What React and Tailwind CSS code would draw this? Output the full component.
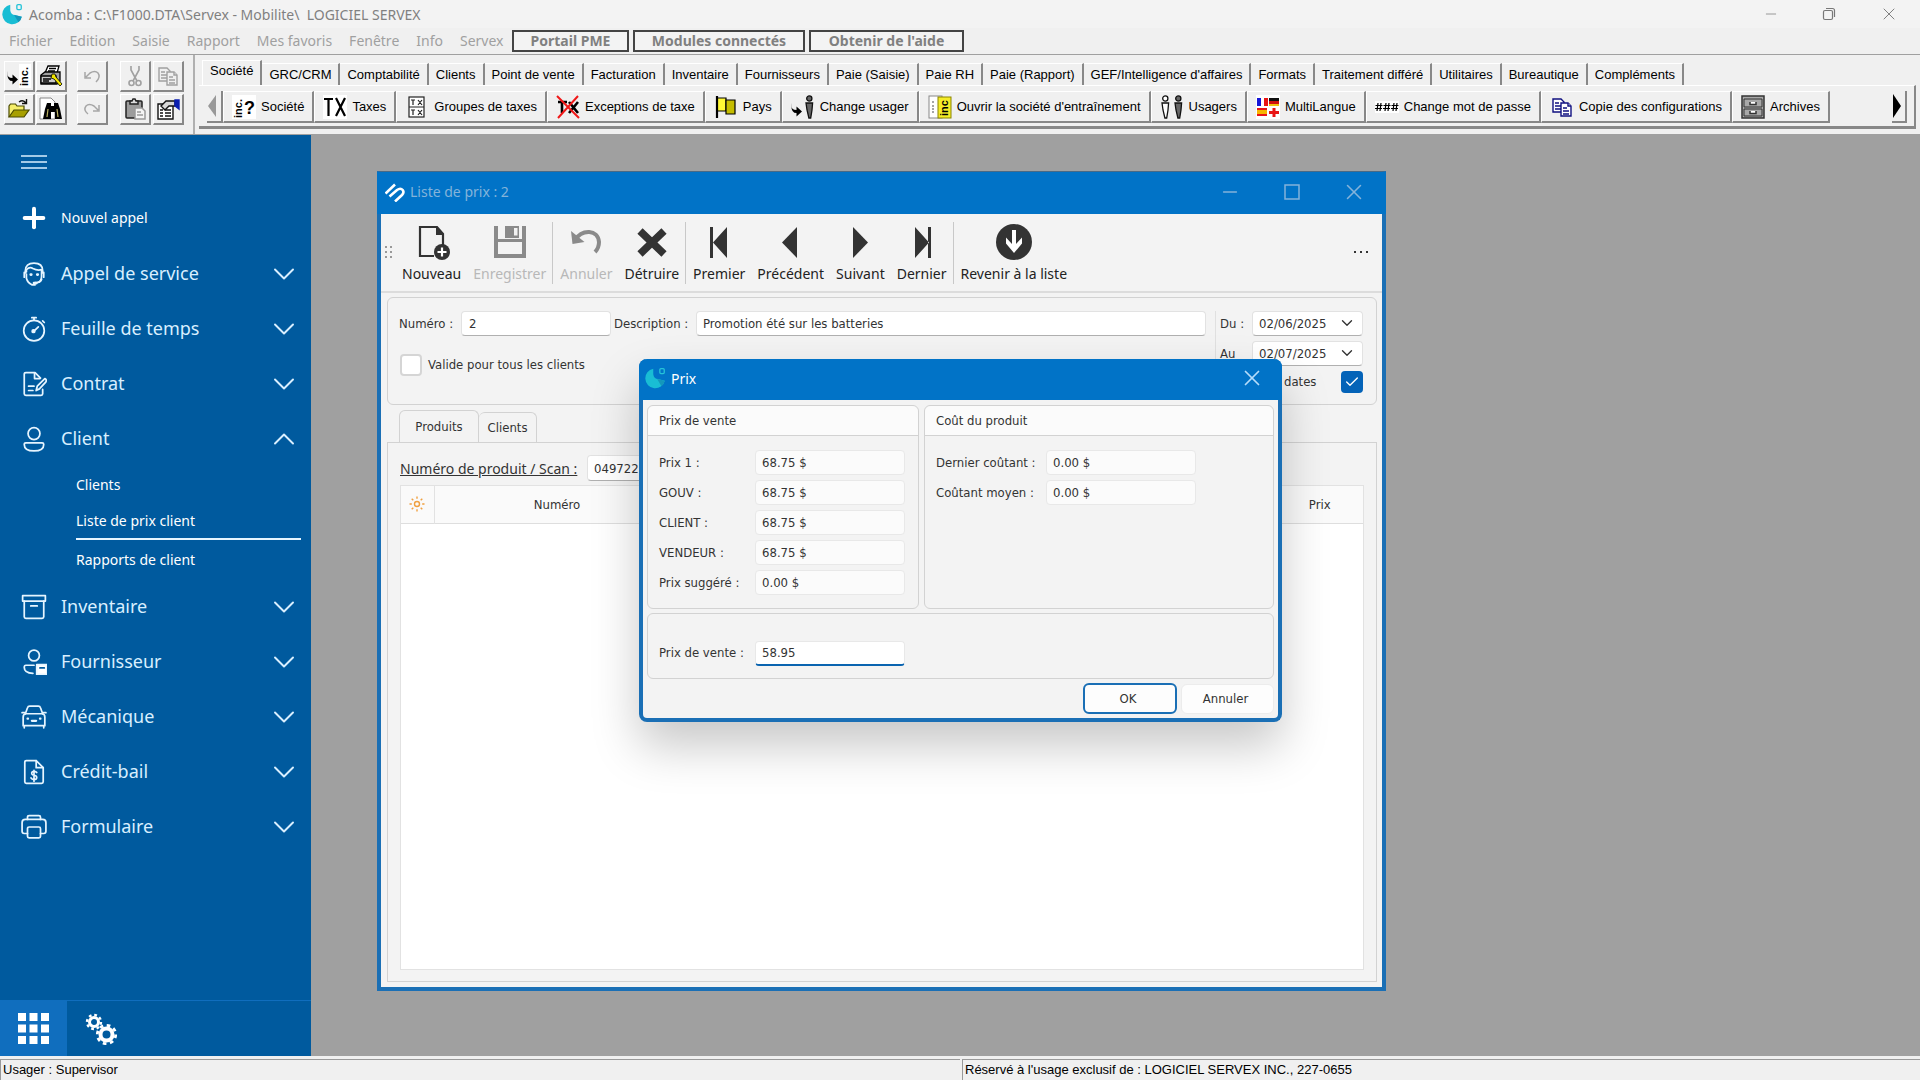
import { useState } from "react";
import { ChevronDown, ChevronUp, Minus, X, Check, Plus } from "lucide-react";

const classicFont = "font-['Liberation_Sans',Arial,sans-serif]";
const modernFont = "font-['Noto_Sans','Open_Sans',sans-serif]";
const formFont = "font-['DejaVu_Sans_Condensed','Noto_Sans',sans-serif]";

const menus = ["Fichier", "Edition", "Saisie", "Rapport", "Mes favoris", "Fenêtre", "Info", "Servex"];

const moduleTabs = [
  "Société", "GRC/CRM", "Comptabilité", "Clients", "Point de vente", "Facturation",
  "Inventaire", "Fournisseurs", "Paie (Saisie)", "Paie RH", "Paie (Rapport)",
  "GEF/Intelligence d'affaires", "Formats", "Traitement différé", "Utilitaires",
  "Bureautique", "Compléments",
];

/* ---------- Icons ---------- */

function AcombaLogo({ className }) {
  return (
    <svg viewBox="0 0 20 20" className={className}>
      <path d="M7.500 1.500A9 9 0 1 0 18 12.500L12 11Q8 10.500 7.500 6.500Z" fill="#19bdd4" />
      <path d="M11 10.800l7 1.700a9 9 0 0 1-3 5z" fill="#1497bb" />
      <rect x="13.500" y="1.500" width="4" height="4.500" rx="1" fill="none" stroke="#25c3d8" strokeWidth="1.200" />
    </svg>
  );
}

function ServexLogo() {
  return (
    <svg viewBox="0 0 20 20" className="size-5" fill="none" stroke="#fff" strokeWidth="2.600">
      <path d="M0.500 11.500L10 2.500" />
      <path d="M4.500 14.500L12 8Q15.500 5.500 17.700 8Q19.500 10.500 17 13L10 19.500" />
    </svg>
  );
}

function IncArrow() {
  return (
    <svg viewBox="0 0 24 24" className="size-6">
      <rect x="12" y="0" width="12" height="24" fill="#fff" />
      <path d="M0.500 7v3q0 4 5 4V10.500l5.500 5-5.500 5V17Q-0.500 17 0.500 7z" fill="#000" />
      <text x="-22" y="21" transform="rotate(-90)" fontSize="11" fontWeight="700" fontFamily="Liberation Sans">inc.</text>
    </svg>
  );
}

function PrintWrench() {
  return (
    <svg viewBox="0 0 24 24" className="size-6" stroke="#000" strokeWidth="1.300">
      <path d="M9 2h11l-2 7H6z" fill="#fff" />
      <path d="M10 4.500h7M9 7h7" />
      <path d="M2 11l4-3h15v9l-3 3H2z" fill="#a0a0a0" />
      <path d="M2 12h15v7H2z" fill="#c8c8c8" />
      <path d="M4 15h8M4 17h6" />
      <path d="M13 10h3l1 3 6 7-2 2-6-7-3-1z" fill="#f2e600" strokeWidth="0.800" />
    </svg>
  );
}

function UndoGray() {
  return (
    <svg viewBox="0 0 24 24" className="size-6" fill="none" stroke="#a6a6a6" strokeWidth="1.500">
      <path d="M5 8v6h6M6 13l4-4q5-3 8 0 3 4-2 9" />
    </svg>
  );
}

function RedoGray() {
  return (
    <svg viewBox="0 0 24 24" className="size-6" fill="none" stroke="#a6a6a6" strokeWidth="1.500">
      <path d="M19 8v6h-6M18 13l-4-4q-5-3-8 0-3 4 2 8" />
    </svg>
  );
}

function CutGray() {
  return (
    <svg viewBox="0 0 24 24" className="size-6" fill="none" stroke="#a0a0a0" strokeWidth="1.600">
      <path d="M8 2v4l6 11M16 2v4l-6 11" />
      <circle cx="8.500" cy="19" r="2.500" />
      <circle cx="15.500" cy="19" r="2.500" />
    </svg>
  );
}

function PageGlyph({ color, fill }) {
  return (
    <svg viewBox="0 0 24 24" className="size-6" stroke={color} strokeWidth="1.400" fill={fill}>
      <path d="M3 4h8l3 3v10H3z" />
      <path d="M5 8h4M5 11h6M5 14h6" />
      <path d="M11 8h7l3 3v10H11z" />
      <path d="M18 8v3h3M13 13h4M13 16h6M13 19h6" />
    </svg>
  );
}

function OpenFolder() {
  return (
    <svg viewBox="0 0 24 24" className="size-6" stroke="#4a4a00" strokeWidth="1.200">
      <path d="M2 20V9l1.500-2h5L10 9h7v4" fill="#f5ee6a" />
      <path d="M2 20l5-7h15l-5 7z" fill="#a8a000" />
      <path d="M12 5q4-3 7 1M19.500 2v4.500H15" fill="none" stroke="#111" strokeWidth="1.400" />
    </svg>
  );
}

function Binoculars() {
  return (
    <svg viewBox="0 0 24 24" className="size-6">
      <path d="M1 1h11l4 4v17H1z" fill="#fff" stroke="#888" strokeWidth="1" />
      <path d="M8 6h4v3h3V6h4l2 6 2 10h-7v-7h-4v7H4l2-10z" fill="#000" />
      <path d="M9 12l-1 8M18 12l1 8" stroke="#b8b060" strokeWidth="1.200" />
    </svg>
  );
}

function Clipboard() {
  return (
    <svg viewBox="0 0 24 24" className="size-6" stroke="#222" strokeWidth="1.500">
      <rect x="3" y="4" width="16" height="17" rx="1" fill="#9c9c9c" />
      <path d="M7 7V4h2l1-2h2l1 2h2v3z" fill="#ddd" />
      <path d="M12 11h7l3 3v8H12z" fill="#f4f4f4" stroke="#999" />
      <path d="M14 15h4M14 18h6" stroke="#999" />
    </svg>
  );
}

function HandForm() {
  return (
    <svg viewBox="0 0 24 24" className="size-6" stroke="#111" strokeWidth="1.400">
      <path d="M2 7h15v15H2z" fill="#fff" />
      <path d="M4 13h3M9 13h6M4 16h3M9 16h6M4 19h3M9 19h6" />
      <path d="M5 9l5-5h9v5h-6l-4 4z" fill="#d8d8d8" />
      <path d="M19 3h4v9l-4-3z" fill="#0b1fb0" stroke="#0b1fb0" />
    </svg>
  );
}

function IncQuestion() {
  return (
    <svg viewBox="0 0 24 24" className="size-6">
      <rect width="24" height="24" fill="#fff" />
      <text x="-23" y="10" transform="rotate(-90)" fontSize="11" fontWeight="700" fontFamily="Liberation Sans">inc.</text>
      <text x="12" y="19" fontSize="18" fontWeight="700" fontFamily="Liberation Sans">?</text>
    </svg>
  );
}

function TaxIcon() {
  return (
    <svg viewBox="0 0 24 24" className="size-6">
      <rect width="24" height="24" fill="#fff" />
      <path d="M1 4h9M5.500 4v17M13 3l9 18M22 3l-9 18" stroke="#000" strokeWidth="2.200" />
    </svg>
  );
}

function TaxGroup() {
  return (
    <svg viewBox="0 0 24 24" className="size-6" fill="none" stroke="#222" strokeWidth="1.200">
      <rect x="4" y="2" width="15" height="20" fill="#fff" />
      <path d="M4 12h15M6 5h4M8 5v5M13 5l4 5M17 5l-4 5M6 15h4M8 15v5M13 15l4 5M17 15l-4 5" />
    </svg>
  );
}

function TaxException() {
  return (
    <svg viewBox="0 0 24 24" className="size-6">
      <path d="M2 7h9M6 7v11M13 7l9 11M22 7l-9 11" stroke="#000" strokeWidth="2.600" />
      <path d="M1 1l22 22M22 1L2 23" stroke="#f01818" strokeWidth="2" />
    </svg>
  );
}

function FlagIcon() {
  return (
    <svg viewBox="0 0 24 24" className="size-6" stroke="#000" strokeWidth="1.200">
      <path d="M3 3h9v13H3z" fill="#fff835" />
      <path d="M12 5h9v14h-9z" fill="#c5bd00" />
      <path d="M3 1v22" strokeWidth="2.200" />
    </svg>
  );
}

function Person({ x, fill }) {
  return (
    <g transform={`translate(${x} 0)`} stroke="#111" strokeWidth="1.300" fill={fill}>
      <circle cx="4.300" cy="3.500" r="2.600" />
      <path d="M1 8h6.600l-.6 7-1.300 8H3.900L2 15z" />
    </g>
  );
}

function ChangeUser() {
  return (
    <svg viewBox="0 0 24 24" className="size-6">
      <path d="M0.500 8v3q0 4 5 4V11.500l5.500 5-5.500 5V18Q-0.500 18 0.500 8z" fill="#000" />
      <Person x="14" fill="#666" />
    </svg>
  );
}

function UsersIcon() {
  return (
    <svg viewBox="0 0 24 24" className="size-6">
      <Person x="1" fill="#fff" />
      <Person x="14" fill="#666" />
    </svg>
  );
}

function TrainingIcon() {
  return (
    <svg viewBox="0 0 24 24" className="size-6">
      <rect x="1" y="1" width="13" height="22" fill="#fff" stroke="#888" />
      <path d="M5 6v2M5 10v8" stroke="#888" strokeWidth="1.500" strokeDasharray="2 1" />
      <rect x="10" y="2" width="13" height="21" fill="#f5ec28" stroke="#8a8400" />
      <text x="-21" y="20" transform="rotate(-90)" fontSize="11" fontWeight="700" fontFamily="Liberation Sans">inc</text>
    </svg>
  );
}

function LanguagesIcon() {
  return (
    <svg viewBox="0 0 24 24" className="size-6">
      <rect width="24" height="24" fill="#fff" />
      <path d="M1 3h4v8H1z" fill="#1616d8" />
      <path d="M8 3h4v8H8z" fill="#e81515" />
      <path d="M13 3h10v3H13z" fill="#111" />
      <path d="M13 6h10v3H13z" fill="#d01010" />
      <path d="M13 9h10v2H13z" fill="#f0c010" />
      <path d="M1 13h10v2H1zM1 19h10v2H1z" fill="#e81515" />
      <path d="M1 15h10v4H1z" fill="#f7b500" />
      <path d="M16.500 13h3v3h3.500v3h-3.500v3h-3v-3H13v-3h3.500z" fill="#e81515" />
    </svg>
  );
}

function HashIcon() {
  return (
    <svg viewBox="0 0 24 24" className="size-6">
      <rect y="6" width="24" height="12" fill="#fff" />
      <path d="M3 8L2 16M6 8L5 16M0.500 10.500h7M0 13.500h7M11 8l-1 8M14 8l-1 8M8.500 10.500h7M8 13.500h7M19 8l-1 8M22 8l-1 8M16.500 10.500h7M16 13.500h7" stroke="#000" strokeWidth="1.200" />
    </svg>
  );
}

function CabinetIcon() {
  return (
    <svg viewBox="0 0 24 24" className="size-6" stroke="#333" strokeWidth="1.500" fill="#a8a8a8">
      <path d="M1 1h22v22H1z" />
      <path d="M3 4h18v8H3zM3 14h18v7H3z" strokeWidth="1" />
      <path d="M9 7v2.500h6V7M9 16v2.500h6V16" fill="#fff" />
    </svg>
  );
}

const moduleActions = [
  { label: "Société", icon: <IncQuestion /> },
  { label: "Taxes", icon: <TaxIcon /> },
  { label: "Groupes de taxes", icon: <TaxGroup /> },
  { label: "Exceptions de taxe", icon: <TaxException /> },
  { label: "Pays", icon: <FlagIcon /> },
  { label: "Change usager", icon: <ChangeUser /> },
  { label: "Ouvrir la société d'entraînement", icon: <TrainingIcon /> },
  { label: "Usagers", icon: <UsersIcon /> },
  { label: "MultiLangue", icon: <LanguagesIcon /> },
  { label: "Change mot de passe", icon: <HashIcon /> },
  { label: "Copie des configurations", icon: <PageGlyph color="#101080" fill="#fff" /> },
  { label: "Archives", icon: <CabinetIcon /> },
];

const navIcons = {
  service: (
    <>
      <path d="M4 11V9q0-7 8-7t8 7v2" />
      <path d="M5 10V8q3-3 6-1 4 2 8 1v6q0 5-4 6" />
      <path d="M5 12v4q1 4 5 6h3M3 10.500v4.500M21 10.500v4.500M19 17q-1 3-6 3" />
      <path d="M9 12.500h.5M15 12.500h.5M12 20.500h2" strokeWidth="2.500" />
    </>
  ),
  time: (
    <>
      <circle cx="12" cy="13.500" r="9.500" />
      <path d="M10 1.500h4M12 2v2M20 4.500l1.500 1.500M12 14l4-4" />
      <circle cx="11.500" cy="14" r="1.200" fill="#fff" />
    </>
  ),
  contract: (
    <>
      <path d="M20 17v4q0 1.500-1.500 1.500h-14Q3 22.500 3 21V3Q3 1.500 4.500 1.500H13l5 5" />
      <path d="M12.500 2v5h5M7 14h5M7 18h4" />
      <path d="M14 18l1-4 7-7q2 1 1 3l-6 6.500z" />
    </>
  ),
  client: (
    <>
      <circle cx="12" cy="7" r="5.500" />
      <path d="M4.500 15.500h15q1.500 0 1.500 1.500 0 6-9 6t-9-6q0-1.500 1.500-1.500z" />
    </>
  ),
  stock: (
    <>
      <rect x="1.500" y="1.500" width="21" height="5" />
      <path d="M3 6.500V21q0 1.500 1.500 1.500h15q1.500 0 1.500-1.500V6.500M9 11h6" />
    </>
  ),
  supplier: (
    <>
      <circle cx="12" cy="6" r="5" />
      <path d="M12 15H4.500Q3 15 3 17q0 5 8 5.500" />
      <path d="M14.500 14.500h9.500v9h-9.500z" fill="#fff" />
      <path d="M17.500 17.500h4" stroke="#005a9e" />
    </>
  ),
  car: (
    <>
      <path d="M4 9l2-5.500Q6.500 2 8 2h8q1.500 0 2 1.500L20 9M1 8h3M20 8h3" />
      <path d="M2 20v-8q0-3 3-3h14q3 0 3 3v8zM3 20v2M21 20v2" />
      <path d="M6 13.500h.5M17.500 13.500h.5M10 15.500h4" strokeWidth="2" />
    </>
  ),
  credit: (
    <>
      <path d="M14 1.500H5Q3.500 1.500 3.500 3v18q0 1.500 1.500 1.500h14q1.500 0 1.500-1.500V8z" />
      <path d="M14 1.500V8h6.500" />
      <path d="M14.500 12.500q-1-1.500-3-1-2 .5-1.500 2.200.4 1 2.200 1.300 2.300.5 2.300 2 0 2-2.500 2-2 0-2.800-1.500M12 10.500v10" />
    </>
  ),
  form: (
    <>
      <path d="M6 5V3q0-1.500 1.500-1.500h9Q18 1.500 18 3v2" />
      <path d="M6 18H3q-2 0-2-2V8q0-3 3-3h16q3 0 3 3v8q0 2-2 2h-3" />
      <rect x="6" y="12" width="12" height="10" rx="1.500" />
    </>
  ),
};

const navItems = [
  { label: "Appel de service", icon: "service" },
  { label: "Feuille de temps", icon: "time" },
  { label: "Contrat", icon: "contract" },
  { label: "Client", icon: "client", children: ["Clients", "Liste de prix client", "Rapports de client"] },
  { label: "Inventaire", icon: "stock" },
  { label: "Fournisseur", icon: "supplier" },
  { label: "Mécanique", icon: "car" },
  { label: "Crédit-bail", icon: "credit" },
  { label: "Formulaire", icon: "form" },
];

/* ---------- Application chrome ---------- */

function ClassicButton({ label, children }) {
  return (
    <button
      aria-label={label}
      className="flex size-[31px] items-center justify-center border-t border-l border-r-2 border-b-2 border-t-white border-l-white border-r-[#888] border-b-[#888] bg-[#f0f0f0]"
    >
      {children}
    </button>
  );
}

function TitleBar() {
  return (
    <header className="flex h-7 items-center bg-[#f3f3f3] pl-0.5 text-[14px] text-[#808080]">
      <AcombaLogo className="size-[22px]" />
      <h1 className="ml-[5px] flex-1 whitespace-pre">{"Acomba : C:\\F1000.DTA\\Servex - Mobilite\\  LOGICIEL SERVEX"}</h1>
      <button aria-label="Réduire" className="flex w-[58px] justify-center"><Minus className="size-4" strokeWidth={1.2} /></button>
      <button aria-label="Restaurer" className="flex w-[58px] justify-center">
        <svg viewBox="0 0 16 16" className="size-4" fill="none" stroke="#777" strokeWidth="1.200">
          <rect x="2.500" y="4.500" width="9" height="9" rx="1.500" />
          <path d="M5 2.500h6.500q2 0 2 2V11" />
        </svg>
      </button>
      <button aria-label="Fermer" className="flex w-[62px] justify-center"><X className="size-5" strokeWidth={1.2} /></button>
    </header>
  );
}

function MenuBar() {
  return (
    <nav className="flex h-[27px] items-center border-b border-[#a0a0a0] bg-[#f0f0f0] pb-px pl-px text-[14px] text-[#a0a0a0]">
      <div className="flex w-[511px] gap-px">
        {menus.map((m) => (
          <button key={m} className="px-2 leading-5">{m}</button>
        ))}
      </div>
      <div className="flex gap-1 text-[#808080]">
        <button className="h-[22px] w-[117px] border-2 border-[#444] bg-[#f3f3f3] leading-4 font-bold">Portail PME</button>
        <button className="h-[22px] w-[172px] border-2 border-[#444] bg-[#f3f3f3] leading-4 font-bold">Modules connectés</button>
        <button className="h-[22px] w-[155px] border-2 border-[#444] bg-[#f3f3f3] leading-4 font-bold">Obtenir de l'aide</button>
      </div>
    </nav>
  );
}

function ToolArea() {
  return (
    <div className={`flex h-20 border-b border-[#a0a0a0] bg-[#f0f0f0] text-[13px] text-black ${classicFont}`}>
      <div className="flex flex-col gap-[2px] pt-[6px] pl-1">
        <div className="flex">
          <ClassicButton label="Changer de société"><IncArrow /></ClassicButton>
          <div className="mr-[10px] ml-px"><ClassicButton label="Configurer l'impression"><PrintWrench /></ClassicButton></div>
          <ClassicButton label="Défaire"><UndoGray /></ClassicButton>
          <div className="mr-[2px] ml-3"><ClassicButton label="Couper"><CutGray /></ClassicButton></div>
          <ClassicButton label="Copier"><PageGlyph color="#a0a0a0" fill="#f0f0f0" /></ClassicButton>
        </div>
        <div className="flex">
          <ClassicButton label="Ouvrir"><OpenFolder /></ClassicButton>
          <div className="mr-[10px] ml-px"><ClassicButton label="Rechercher"><Binoculars /></ClassicButton></div>
          <ClassicButton label="Refaire"><RedoGray /></ClassicButton>
          <div className="mr-[2px] ml-3"><ClassicButton label="Coller"><Clipboard /></ClassicButton></div>
          <ClassicButton label="Propriétés"><HandForm /></ClassicButton>
        </div>
      </div>

      <div className="mr-1 ml-[9px] border-l-2 border-[#b0b0b0]" />

      <div className="mr-1 min-w-0 flex-1">
        <div className="flex h-[30px] items-end pl-[3px]">
          {moduleTabs.map((t, i) => (
            <button
              key={t}
              className={
                i === 0
                  ? "h-[25px] border-t border-r-2 border-l border-t-white border-r-[#888] border-l-white px-[7px] pb-1 whitespace-nowrap"
                  : "h-[22px] border-t border-r-2 border-t-white border-r-[#888] px-[7px] whitespace-nowrap"
              }
            >
              {t}
            </button>
          ))}
        </div>
        <div className="flex h-11 items-start border-t border-r-2 border-b-[3px] border-t-white border-r-[#888] border-b-[#888] pt-[5px] pr-[7px] pl-2">
          <button aria-label="Défiler à gauche" className="flex h-8 w-4 items-center border-r-2 border-b-2 border-[#888]">
            <svg viewBox="0 0 10 24" className="h-6 w-[10px]"><path d="M9 1v22L1 12z" fill="#999" /></svg>
          </button>
          {moduleActions.map((a) => (
            <button
              key={a.label}
              className="flex h-8 items-center gap-[5px] border-t border-r-2 border-b-2 border-l border-t-white border-r-[#888] border-b-[#888] border-l-white px-2 whitespace-nowrap"
            >
              {a.icon}
              {a.label}
            </button>
          ))}
          <button aria-label="Défiler à droite" className="ml-auto flex h-8 w-[15px] items-center border-r-2 border-b-2 border-[#888]">
            <svg viewBox="0 0 10 24" className="h-6 w-[10px]"><path d="M1 0v24l8-12z" fill="#000" /></svg>
          </button>
        </div>
      </div>
    </div>
  );
}

function Sidebar() {
  return (
    <aside className="flex w-[311px] shrink-0 flex-col bg-[#005a9e] text-[18px] text-[#d9efff]">
      <button aria-label="Menu" className="flex h-[54px] items-center pl-[21px]">
        <svg viewBox="0 0 26 16" className="h-4 w-[26px]" stroke="#d9efff" strokeWidth="1.300">
          <path d="M0 2h26M0 8h26M0 14h26" />
        </svg>
      </button>
      <button className="flex h-[57px] items-center pl-[18px] text-[14px] text-white">
        <Plus className="mr-[11px] size-8" strokeWidth={3} />
        Nouvel appel
      </button>
      {navItems.map((item) => (
        <div key={item.label}>
          <button className="flex h-[55px] w-full items-center pr-[9px] pl-[21px]">
            <svg viewBox="0 0 24 24" className="mr-[14px] size-[26px]" fill="none" stroke="#e6f5ff" strokeWidth="1.600" strokeLinecap="round" strokeLinejoin="round">
              {navIcons[item.icon]}
            </svg>
            <span className="flex-1 text-left">{item.label}</span>
            {item.children ? <ChevronUp className="size-9" strokeWidth={1.3} /> : <ChevronDown className="size-9" strokeWidth={1.3} />}
          </button>
          {item.children && (
            <ul className="mr-[10px] ml-[76px] pb-[2px] text-[14px] text-white">
              {item.children.map((c, i) => (
                <li key={c} className={i === 1 ? "mb-px border-b-2 border-[#e6f5ff]" : ""}>
                  <a href="#" className="flex h-9 items-center">{c}</a>
                </li>
              ))}
            </ul>
          )}
        </div>
      ))}
      <div className="mt-auto flex h-14 border-t border-[#106ebe]">
        <button aria-label="Modules" className="flex w-[67px] items-center justify-center bg-[#106ebe]">
          <svg viewBox="0 0 31 31" className="size-[31px]" fill="#fff">
            <path d="M0 0h8v8H0zM11.500 0h8v8h-8zM23 0h8v8h-8zM0 11.500h8v8H0zM11.500 11.500h8v8h-8zM23 11.500h8v8h-8zM0 23h8v8H0zM11.500 23h8v8h-8zM23 23h8v8h-8z" />
          </svg>
        </button>
        <button aria-label="Configuration" className="flex w-[67px] items-center justify-center">
          <svg viewBox="0 0 32 32" className="size-8" fill="none" stroke="#fff">
            <circle cx="9" cy="9" r="4.500" strokeWidth="3" />
            <circle cx="9" cy="9" r="7" strokeWidth="2.400" strokeDasharray="2.750 2.750" />
            <circle cx="21.500" cy="21.500" r="6" strokeWidth="4" />
            <circle cx="21.500" cy="21.500" r="9.200" strokeWidth="2.800" strokeDasharray="3.610 3.610" />
          </svg>
        </button>
      </div>
    </aside>
  );
}

/* ---------- Price list window ---------- */

function ToolButton({ label, disabled, children }) {
  return (
    <button disabled={disabled} className={`flex flex-col items-center gap-1 px-[6px] ${disabled ? "text-[#b8b8b8]" : "text-[#222]"}`}>
      <svg viewBox="0 0 36 38" className="h-[38px] w-9">{children}</svg>
      <span className="leading-5">{label}</span>
    </button>
  );
}

function Separator() {
  return <span className="mr-px h-[62px] border-l border-[#c8c8c8]" />;
}

function WindowToolbar() {
  return (
    <div className="flex h-[79px] items-start border-b-2 border-[#dcdcdc] pt-2 pr-3 pl-1 text-[14px]">
      <svg viewBox="0 0 8 14" className="mt-[23px] mr-[3px] h-[14px] w-2" fill="#999">
        <path d="M0 1h2v2H0zM5 1h2v2H5zM0 6h2v2H0zM5 6h2v2H5zM0 11h2v2H0zM5 11h2v2H5z" />
      </svg>
      <ToolButton label="Nouveau">
        <path d="M20 34H6V5h17l6 7v11" fill="none" stroke="#333" strokeWidth="2.200" />
        <path d="M22 4v9h8z" fill="#333" />
        <circle cx="28" cy="30" r="8" fill="#333" />
        <path d="M28 25.500v9M23.500 30h9" stroke="#fff" strokeWidth="2.200" />
      </ToolButton>
      <ToolButton label="Enregistrer" disabled>
        <path d="M2 4h4v13h24V4h4v32H2z" fill="#8a8a8a" />
        <path d="M6 20h24v12H6z" fill="#f3f3f3" />
        <path d="M13 4h14v12H13z" fill="#8a8a8a" />
        <path d="M22 6h3.500v7.500H22z" fill="#f3f3f3" />
      </ToolButton>
      <Separator />
      <ToolButton label="Annuler" disabled>
        <path d="M7 18C14 7 30 7 31 20q0 6-4 10" fill="none" stroke="#8a8a8a" strokeWidth="4" />
        <path d="M3 9l1.500 13 12-2z" fill="#8a8a8a" />
      </ToolButton>
      <ToolButton label="Détruire">
        <path d="M6 9l24 23M30 9L6 32" stroke="#333" strokeWidth="7.500" />
      </ToolButton>
      <Separator />
      <ToolButton label="Premier">
        <path d="M9 5h3v31H9zM26 5v31L12 20.500z" fill="#333" />
      </ToolButton>
      <ToolButton label="Précédent">
        <path d="M24 5v31L9 20.500z" fill="#333" />
      </ToolButton>
      <ToolButton label="Suivant">
        <path d="M11 5v31l15-15.500z" fill="#333" />
      </ToolButton>
      <ToolButton label="Dernier">
        <path d="M24 5h3v31h-3zM11 5v31l14-15.500z" fill="#333" />
      </ToolButton>
      <Separator />
      <ToolButton label="Revenir à la liste">
        <circle cx="18" cy="20" r="18" fill="#333" />
        <path d="M16 8h4v14l6-6.500v6L18 31l-8-9.500v-6l6 6.500z" fill="#fff" />
      </ToolButton>
      <button aria-label="Plus d'options" className="mt-[22px] ml-auto">
        <svg viewBox="0 0 17 16" className="h-4 w-[17px]" fill="#333"><path d="M1 7h2v2H1zM7 7h2v2H7zM13 7h2v2h-2z" /></svg>
      </button>
    </div>
  );
}

function DateSelect({ id, label, value }) {
  return (
    <div className="flex items-center">
      <label htmlFor={id} className="w-8">{label}</label>
      <div className="relative w-[111px]">
        <select id={id} defaultValue={value} className="h-[25px] w-full appearance-none rounded border border-[#e2e2e2] border-b-[#b0b0b0] bg-white pl-[6px]">
          <option>{value}</option>
        </select>
        <ChevronDown className="pointer-events-none absolute top-[3px] right-[7px] size-[18px]" strokeWidth={1.8} />
      </div>
    </div>
  );
}

function PriceListWindow() {
  return (
    <section className="absolute top-[36px] left-[66px] flex h-[820px] w-[1009px] flex-col border-x-[4px] border-t border-b-4 border-x-[#1a6fb5] border-t-[#4a6a85] border-b-[#1a6fb5] bg-[#f3f3f3] text-[13px] text-[#333]">
      <div className="-mx-1 flex h-[42px] shrink-0 items-center bg-[#0173c7] pr-px pb-[3px] pl-2 text-[14px] text-[#84b3da]">
        <ServexLogo />
        <h2 className="ml-[5px] flex-1">Liste de prix : 2</h2>
        <button aria-label="Réduire" className="flex w-[62px] justify-center"><Minus className="size-[22px]" strokeWidth={1.6} /></button>
        <button aria-label="Agrandir" className="flex w-[62px] justify-center">
          <svg viewBox="0 0 18 18" className="size-[18px]" fill="none" stroke="currentColor" strokeWidth="1.500"><rect x="2" y="2" width="14" height="14" /></svg>
        </button>
        <button aria-label="Fermer" className="flex w-[62px] justify-center"><X className="size-[26px]" strokeWidth={1.4} /></button>
      </div>

      <WindowToolbar />

      <div className={`flex flex-1 flex-col pt-1 pr-[5px] pb-[5px] pl-[6px] ${formFont}`}>
        <div className="flex h-[108px] justify-between rounded-md border border-[#d2d2d2] pr-[13px] pl-[11px]">
          <div className="flex flex-1 flex-col pt-[13px]">
            <div className="flex items-center">
              <label htmlFor="numero" className="w-[62px]">Numéro :</label>
              <input id="numero" defaultValue="2" className="h-[25px] w-[150px] rounded border border-[#e2e2e2] border-b-[#b0b0b0] bg-white px-[7px]" />
              <label htmlFor="description" className="ml-[3px] w-[82px]">Description :</label>
              <input id="description" defaultValue="Promotion été sur les batteries" className="mr-[9px] h-[25px] min-w-0 flex-1 rounded border border-[#e2e2e2] border-b-[#b0b0b0] bg-white px-[6px]" />
            </div>
            <div className="mt-[18px] flex items-center gap-[6px] pl-px">
              <input id="tous" type="checkbox" className="size-[22px] appearance-none rounded border-2 border-[#d5d5d5] bg-white" />
              <label htmlFor="tous">Valide pour tous les clients</label>
            </div>
          </div>
          <div className="mt-[13px] flex flex-col gap-[5px] border-l border-[#e0e0e0] pl-1">
            <DateSelect id="du" label="Du :" value="02/06/2025" />
            <DateSelect id="au" label="Au" value="02/07/2025" />
            <div className="flex items-center justify-end">
              <label htmlFor="dates" className="w-[57px]">dates</label>
              <span className="relative flex">
                <input id="dates" type="checkbox" defaultChecked className="size-[22px] appearance-none rounded bg-[#0463b8]" />
                <Check className="pointer-events-none absolute top-[3px] left-[3px] size-4 text-white" strokeWidth={2} />
              </span>
            </div>
          </div>
        </div>

        <div className="mt-[5px] flex items-end pl-3">
          <button className="-mb-px h-[33px] w-[80px] rounded-t-md border border-b-0 border-[#d2d2d2] bg-[#f3f3f3]">Produits</button>
          <button className="h-[30px] w-[58px] rounded-t-md border border-b-0 border-l-0 border-[#d2d2d2] bg-[#f3f3f3]">Clients</button>
        </div>

        <div className="flex flex-1 flex-col border border-[#d2d2d2] px-3 pt-3 pb-[11px]">
          <div className="flex items-center">
            <label htmlFor="scan" className={`w-[187px] text-[14px] underline ${modernFont}`}>Numéro de produit / Scan :</label>
            <input id="scan" defaultValue="049722" className="h-[26px] w-[180px] rounded border border-[#e2e2e2] border-b-[#b0b0b0] bg-white px-[6px]" />
          </div>
          <div className="mt-1 flex-1 border border-[#e2e2e2] bg-white">
            <table className="w-full table-fixed border-collapse bg-[#fafafa]">
              <thead>
                <tr className="h-[37px] border-b border-[#dedede]">
                  <th className="w-[33px] border-r border-[#e2e2e2]">
                    <svg viewBox="0 0 18 18" className="mx-auto size-[18px]" fill="none" stroke="#f0a040" strokeWidth="1.400">
                      <circle cx="9" cy="9" r="2.500" />
                      <path d="M9 1.500v2.300M9 14.200V16.500M1.500 9h2.300M14.200 9H16.500M3.700 3.700l1.600 1.600M12.700 12.700l1.600 1.600M14.300 3.700l-1.600 1.600M5.300 12.700l-1.600 1.600" />
                    </svg>
                  </th>
                  <th className="w-[246px] border-r border-[#e2e2e2] font-normal">Numéro</th>
                  <th className="border-r border-[#e2e2e2]"></th>
                  <th className="w-[87px] font-normal">Prix</th>
                </tr>
              </thead>
            </table>
          </div>
        </div>
      </div>
    </section>
  );
}

/* ---------- Price dialog ---------- */

function ReadOnlyRow({ id, label, value, labelClass }) {
  return (
    <div className="flex items-center">
      <label htmlFor={id} className={labelClass}>{label}</label>
      <input id={id} readOnly value={value} className="h-[25px] w-[150px] rounded border border-[#e8e8e8] bg-[#fbfbfb] px-[6px]" />
    </div>
  );
}

function PriceDialog() {
  const [price, setPrice] = useState("58.95");

  return (
    <section
      role="dialog"
      aria-label="Prix"
      className={`absolute top-[224px] left-[328px] flex w-[643px] flex-col rounded-lg border-x-4 border-b-4 border-[#1a6fb5] bg-[#f3f3f3] text-[13px] text-[#333] shadow-[0_24px_48px_rgba(0,0,0,0.22)] ${formFont}`}
    >
      <div className="-mx-1 flex h-[41px] items-center rounded-t-lg bg-[#0173c7] pr-[17px] pb-[3px] pl-[6px] text-[14px] text-white">
        <AcombaLogo className="size-[22px]" />
        <h2 className={`ml-1 flex-1 ${modernFont}`}>Prix</h2>
        <button aria-label="Fermer"><X className="size-[26px] text-[#b5dcfa]" strokeWidth={1.6} /></button>
      </div>

      <div className="flex gap-[5px] px-1 pt-[5px]">
        <fieldset className="h-[204px] w-[272px] rounded-md border border-[#d2d2d2]">
          <h3 className="flex h-[30px] items-center rounded-t-md border-b border-[#d2d2d2] bg-[#fbfbfb] pl-[11px]">Prix de vente</h3>
          <div className="flex flex-col gap-[5px] pt-[14px] pl-[11px]">
            <ReadOnlyRow id="prix1" label="Prix 1 :" value="68.75 $" labelClass="w-24" />
            <ReadOnlyRow id="gouv" label="GOUV :" value="68.75 $" labelClass="w-24" />
            <ReadOnlyRow id="client" label="CLIENT :" value="68.75 $" labelClass="w-24" />
            <ReadOnlyRow id="vendeur" label="VENDEUR :" value="68.75 $" labelClass="w-24" />
            <ReadOnlyRow id="suggere" label="Prix suggéré :" value="0.00 $" labelClass="w-24" />
          </div>
        </fieldset>
        <fieldset className="h-[204px] flex-1 rounded-md border border-[#d2d2d2]">
          <h3 className="flex h-[30px] items-center rounded-t-md border-b border-[#d2d2d2] bg-[#fbfbfb] pl-[11px]">Coût du produit</h3>
          <div className="flex flex-col gap-[5px] pt-[14px] pl-[11px]">
            <ReadOnlyRow id="dernier" label="Dernier coûtant :" value="0.00 $" labelClass="w-[110px]" />
            <ReadOnlyRow id="moyen" label="Coûtant moyen :" value="0.00 $" labelClass="w-[110px]" />
          </div>
        </fieldset>
      </div>

      <div className="mx-1 mt-1 flex h-[66px] items-center rounded-md border border-[#d2d2d2] pt-[14px] pl-[11px]">
        <label htmlFor="vente" className="w-24">Prix de vente :</label>
        <input
          id="vente"
          value={price}
          onChange={(e) => setPrice(e.target.value)}
          className="h-[25px] w-[150px] rounded border border-b-2 border-[#e8e8e8] border-b-[#0a64b0] bg-white px-[6px]"
        />
      </div>

      <div className="flex items-center justify-end gap-1 px-1 pt-1 pb-1">
        <button className="h-[31px] w-[94px] rounded-md border-2 border-[#1a6fb5] bg-[#fdfdfd] pr-1">OK</button>
        <button className="h-[30px] w-[93px] rounded-md border border-[#ececec] bg-[#fdfdfd] pr-1">Annuler</button>
      </div>
    </section>
  );
}

export default function App() {
  return (
    <div className={`flex min-h-screen flex-col bg-[#f0f0f0] ${modernFont}`}>
      <TitleBar />
      <MenuBar />
      <ToolArea />
      <div className="flex flex-1">
        <Sidebar />
        <main className="relative flex-1 overflow-hidden bg-[#a0a0a0]">
          <PriceListWindow />
          <PriceDialog />
        </main>
      </div>
      <footer className={`flex h-6 items-end bg-[#f0f0f0] text-[13px] text-black ${classicFont}`}>
        <span className="h-[21px] w-1/2 border-t border-l border-[#999] pl-[2px] leading-5">Usager : Supervisor</span>
        <span className="ml-[2px] h-[21px] flex-1 border-t border-l border-[#999] pl-[2px] leading-5">Réservé à l'usage exclusif de : LOGICIEL SERVEX INC., 227-0655</span>
      </footer>
    </div>
  );
}
